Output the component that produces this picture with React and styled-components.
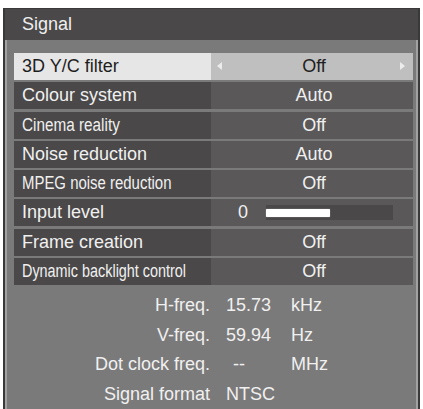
import React from "react";
import styled, { createGlobalStyle } from "styled-components";

const Global = createGlobalStyle`
  html, body {
    margin: 0;
    padding: 0;
    background: #ffffff;
  }
  body {
    font-family: "Liberation Sans", Arial, sans-serif;
  }
`;

const Panel = styled.div`
  margin: 8px 3px 0 3px;
  width: 417px;
  height: 401px;
  box-sizing: border-box;
  background: #7b7a7a;
  border-left: 2px solid #3a3939;
  border-right: 2px solid #3a3939;
  border-top: 1px solid #3a3939;
  display: flex;
  flex-direction: column;
  overflow: hidden;
`;

const Header = styled.div`
  height: 31px;
  flex: none;
  background: #4a4848;
  display: flex;
  align-items: center;
  padding-left: 17px;
  color: #eeeeee;
  font-size: 18px;
`;

const Body = styled.div`
  flex: 1;
  border-left: 2px solid #a3a2a2;
  border-right: 2px solid #a3a2a2;
  padding: 13px 3px 0 7px;
`;

const Rows = styled.div`
  display: flex;
  flex-direction: column;
  gap: 2.3px;
`;

const Row = styled.div`
  display: flex;
  height: 27px;
  font-size: 18px;
  box-shadow: inset 0 1px 0 rgba(255, 255, 255, 0.07);
`;

const Label = styled.div`
  width: 197px;
  flex: none;
  display: flex;
  align-items: center;
  padding-left: 8px;
  box-sizing: border-box;
  overflow: hidden;
  white-space: nowrap;
  background: ${(p) => (p.$active ? "#e6e6e6" : "#4a4848")};
  color: ${(p) => (p.$active ? "#1e1e1e" : "#f0f0f0")};
`;

const Squeeze = styled.span`
  display: inline-block;
  transform: scaleX(${(p) => p.$x || 1});
  transform-origin: left center;
`;

const Value = styled.div`
  flex: 1;
  position: relative;
  display: flex;
  align-items: center;
  justify-content: center;
  padding-left: 4px;
  background: ${(p) => (p.$active ? "#c0bfbf" : "#5a5858")};
  color: ${(p) => (p.$active ? "#1e1e1e" : "#f0f0f0")};
`;

const Arrow = styled.svg`
  position: absolute;
  top: 9px;
  ${(p) => (p.$side === "left" ? "left: 6px;" : "right: 8px;")}
`;

const LevelCell = styled.div`
  flex: 1;
  display: flex;
  align-items: center;
  background: #5a5858;
  color: #f0f0f0;
  padding-left: 27px;
  gap: 18px;
`;

const Track = styled.div`
  width: 127px;
  height: 15px;
  background: #4a4848;
  display: flex;
  align-items: center;
`;

const Fill = styled.div`
  height: 8px;
  background: #ffffff;
  border-radius: 1px;
  box-shadow: 0 0 1px #dddddd;
`;

const Info = styled.div`
  display: grid;
  grid-template-columns: 196px 81px 1fr;
  grid-auto-rows: 29.5px;
  padding-top: 6px;
  font-size: 18px;
  color: #f0f0f0;
  align-items: center;
`;

const InfoLabel = styled.div`
  text-align: right;
`;

const InfoValue = styled.div`
  padding-left: ${(p) => (p.$dash ? "23px" : "16px")};
`;

const Unit = styled.div``;

const rows = [
  { label: "3D Y/C filter", value: "Off", active: true },
  { label: "Colour system", value: "Auto" },
  { label: "Cinema reality", value: "Off", x: 0.85 },
  { label: "Noise reduction", value: "Auto" },
  { label: "MPEG noise reduction", value: "Off", x: 0.83 },
  { label: "Input level", level: 0 },
  { label: "Frame creation", value: "Off" },
  { label: "Dynamic backlight control", value: "Off", x: 0.8 },
];

const info = [
  { label: "H-freq.", value: "15.73", unit: "kHz" },
  { label: "V-freq.", value: "59.94", unit: "Hz" },
  { label: "Dot clock freq.", value: "--", unit: "MHz", dash: true },
  { label: "Signal format", value: "NTSC", unit: "" },
];

export default function App() {
  return (
    <>
      <Global />
      <Panel>
        <Header>Signal</Header>
        <Body>
          <Rows>
            {rows.map((r) => (
              <Row key={r.label}>
                <Label $active={r.active}>
                  <Squeeze $x={r.x}>{r.label}</Squeeze>
                </Label>
                {r.level !== undefined ? (
                  <LevelCell>
                    <span>{r.level}</span>
                    <Track>
                      <Fill style={{ width: "64px" }} />
                    </Track>
                  </LevelCell>
                ) : (
                  <Value $active={r.active}>
                    {r.active && (
                      <Arrow $side="left" width="5" height="8" viewBox="0 0 5 8">
                        <path d="M5 0 L0 4 L5 8 Z" fill="#ececec" />
                      </Arrow>
                    )}
                    {r.value}
                    {r.active && (
                      <Arrow $side="right" width="5" height="8" viewBox="0 0 5 8">
                        <path d="M0 0 L5 4 L0 8 Z" fill="#ececec" />
                      </Arrow>
                    )}
                  </Value>
                )}
              </Row>
            ))}
          </Rows>
          <Info>
            {info.map((i) => (
              <React.Fragment key={i.label}>
                <InfoLabel>{i.label}</InfoLabel>
                <InfoValue $dash={i.dash}>{i.value}</InfoValue>
                <Unit>{i.unit}</Unit>
              </React.Fragment>
            ))}
          </Info>
        </Body>
      </Panel>
    </>
  );
}
